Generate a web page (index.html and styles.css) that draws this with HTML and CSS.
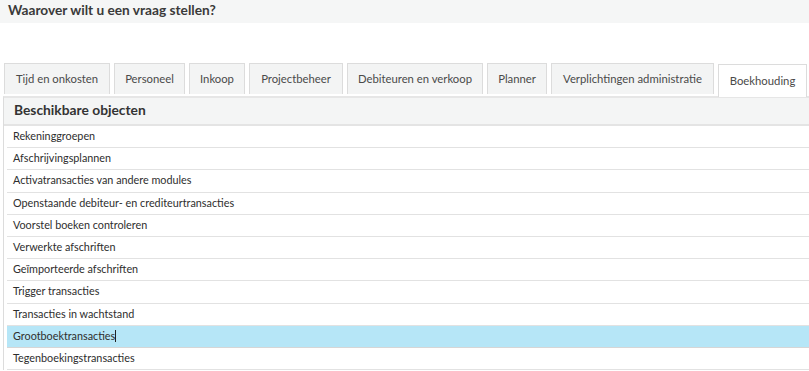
FILE: index.html
```html
<!DOCTYPE html>
<html lang="nl">
<head>
<meta charset="utf-8">
<link rel="stylesheet" href="styles.css">
</head>
<body>
<div class="topbar"><h1 class="title">Waarover wilt u een vraag stellen?</h1></div>
<div class="tabs">
  <div class="tab">Tijd en onkosten</div>
  <div class="tab">Personeel</div>
  <div class="tab">Inkoop</div>
  <div class="tab">Projectbeheer</div>
  <div class="tab">Debiteuren en verkoop</div>
  <div class="tab">Planner</div>
  <div class="tab">Verplichtingen administratie</div>
  <div class="tab active">Boekhouding</div>
</div>
<div class="panel">
  <div class="panel-head">Beschikbare objecten</div>
  <ul class="list">
    <li class="row">Rekeninggroepen</li>
    <li class="row">Afschrijvingsplannen</li>
    <li class="row">Activatransacties van andere modules</li>
    <li class="row">Openstaande debiteur- en crediteurtransacties</li>
    <li class="row">Voorstel boeken controleren</li>
    <li class="row">Verwerkte afschriften</li>
    <li class="row">Geïmporteerde afschriften</li>
    <li class="row">Trigger transacties</li>
    <li class="row">Transacties in wachtstand</li>
    <li class="row selected">Grootboektransacties<span class="caret"></span></li>
    <li class="row">Tegenboekingstransacties</li>
  </ul>
</div>
</body>
</html>
```
FILE: styles.css
```css
html, body {
  margin: 0;
  padding: 0;
  background: #ffffff;
  overflow: hidden;
}
body {
  width: 809px;
  height: 371px;
  font-family: Lato, "Open Sans", "Liberation Sans", sans-serif;
  color: #333;
}
.topbar {
  background: #f5f6f6;
  height: 23px;
  padding-left: 8px;
  box-sizing: border-box;
}
.title {
  margin: 0;
  font-size: 13.7px;
  font-weight: 700;
  line-height: 19px;
  color: #3a3a3a;
}
.tabs {
  display: flex;
  gap: 4px;
  margin-top: 41px;
  padding-left: 4px;
  height: 32px;
  align-items: flex-end;
}
.tab {
  box-sizing: border-box;
  height: 31px;
  border: 1px solid #dcdcdc;
  border-bottom: none;
  background: #f3f4f4;
  font-size: 11.3px;
  color: #4a4a4a;
  line-height: 30px;
  padding: 0;
  text-align: center;
  white-space: nowrap;
}
.tabs .tab:nth-child(1) { width: 106px; }
.tabs .tab:nth-child(2) { width: 71px; }
.tabs .tab:nth-child(3) { width: 56px; }
.tabs .tab:nth-child(4) { width: 94px; }
.tabs .tab:nth-child(5) { width: 136px; }
.tabs .tab:nth-child(6) { width: 60px; }
.tabs .tab:nth-child(7) { width: 163px; }
.tabs .tab:nth-child(8) { width: 89px; }
.tab.active {
  background: #ffffff;
  height: 33px;
  line-height: 32px;
  position: relative;
  top: 1px;
}
.tab:not(.active) {
  margin-bottom: 2px;
}
.panel {
  margin-left: 3px;
  border-left: 1px solid #dcdcdc;
  border-top: 2px solid #e6e6e6;
}
.panel-head {
  background: #f4f5f5;
  height: 26px;
  line-height: 24px;
  padding-left: 10px;
  font-size: 13.8px;
  font-weight: 700;
  color: #333;
  border-bottom: 2px solid #e4e4e4;
}
.list {
  list-style: none;
  margin: 0 0 0 3px;
  padding: 0;
}
.row {
  height: 21.2px;
  line-height: 20px;
  border-bottom: 1px solid #e2e2e2;
  font-size: 10.8px;
  padding-left: 6px;
  color: #2e2e2e;
}
.row.selected {
  background: #b6e6f7;
  border-bottom-color: #d6d6d6;
}
.caret {
  display: inline-block;
  width: 1px;
  height: 12px;
  background: #222;
  vertical-align: -2px;
}
```
